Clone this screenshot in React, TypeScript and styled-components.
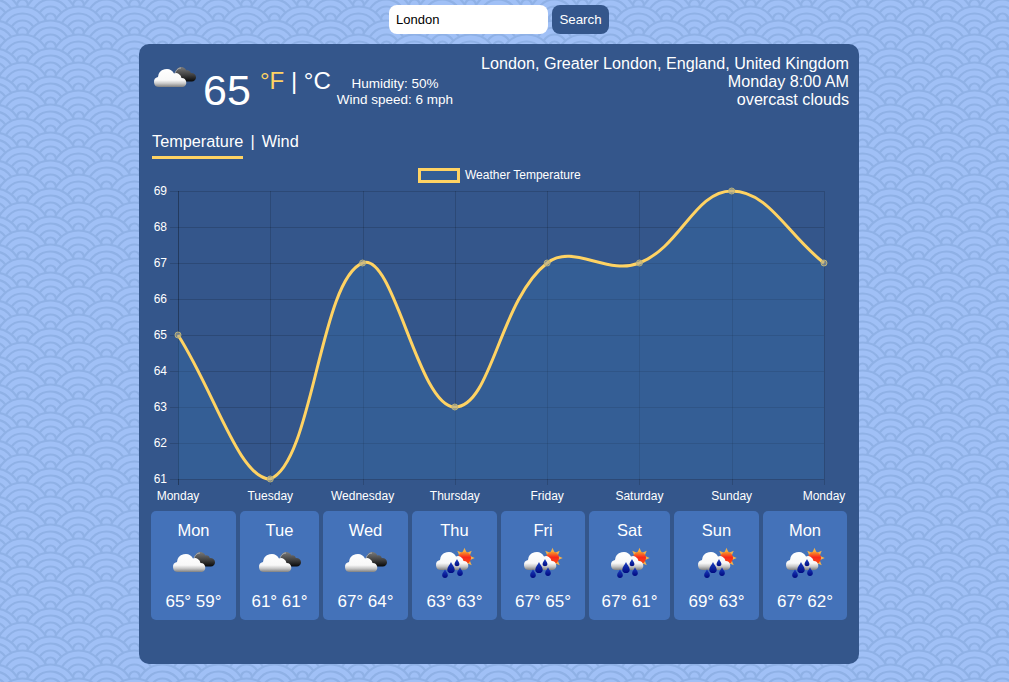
import { useId } from "react";
import styled, { createGlobalStyle } from "styled-components";

const FONT = `"Liberation Sans", Arial, sans-serif`;
const YELLOW = "#ffd363";
const PANEL = "#34568b";

// seigaiha wave tile, rows staggered by half a tile and painted top to bottom
const buildWaveTile = () => {
  let circles = "";
  for (let row = -2; row < 7; row++) {
    const y = 5 + row * 14;
    const offset = row % 2 === 0 ? 0 : 28;
    for (let col = -1; col < 3; col++) {
      const x = 22.5 + offset + col * 56;
      circles += `<circle cx="${x}" cy="${y}" r="26.5" fill="#a0c0f6"/>`;
      [26.5, 19.5, 12.5, 5.5].forEach((r) => {
        circles += `<circle cx="${x}" cy="${y}" r="${r}" fill="none" stroke="#8fb1e6" stroke-width="2.2"/>`;
      });
    }
  }
  const svg = `<svg xmlns="http://www.w3.org/2000/svg" width="56" height="28">${circles}</svg>`;
  return `url("data:image/svg+xml,${encodeURIComponent(svg)}")`;
};

const GlobalStyle = createGlobalStyle`
  html, body {
    margin: 0;
    height: 100%;
  }

  body {
    background-color: #a0c0f6;
    background-image: ${buildWaveTile()};
    font-family: ${FONT};
    overflow: hidden;
  }
`;

const Page = styled.div`
  width: 998px;
  height: 682px;
  display: flex;
  flex-direction: column;
  align-items: center;
`;

const SearchForm = styled.form`
  display: flex;
  gap: 4px;
  margin: 5px 0 10px;
`;

const SearchInput = styled.input`
  width: 159px;
  height: 29px;
  box-sizing: border-box;
  padding: 0 7px;
  border: 0;
  border-radius: 8px;
  background: #fff;
  color: #000;
  font-family: ${FONT};
  font-size: 13px;
  outline: none;
`;

const SearchButton = styled.button`
  width: 57px;
  height: 29px;
  padding: 0;
  border: 0;
  border-radius: 8px;
  background: ${PANEL};
  color: #fff;
  font-family: ${FONT};
  font-size: 13.33px;
`;

const Panel = styled.main`
  width: 720px;
  height: 620px;
  box-sizing: border-box;
  padding-top: 10px;
  border-radius: 10px;
  background: ${PANEL};
  color: #fff;
`;

const Header = styled.header`
  display: flex;
  justify-content: space-between;
  height: 54px;
  padding: 0 10px 0 11px;
`;

const Current = styled.div`
  display: flex;
  align-items: flex-start;
`;

const CurrentIcon = styled.div`
  width: 50px;
  height: 50px;
  margin-top: -2px;
`;

const BigTemp = styled.span`
  width: 48px;
  margin: 14px 0 0 3px;
  font-size: 43px;
  line-height: 44px;
`;

const Units = styled.div`
  margin: 15px 0 0 9px;
  font-size: 24px;
  line-height: 24px;
`;

const Unit = styled.span<{ $active?: boolean }>`
  color: ${({ $active }) => ($active ? YELLOW : "#fff")};
`;

const Stats = styled.div`
  margin: 22px 0 0 6px;
  font-size: 13.5px;
  line-height: 16px;
  text-align: center;
`;

const Place = styled.div`
  font-size: 16.15px;
  line-height: 18px;
  text-align: right;
`;

const Tabs = styled.nav`
  display: flex;
  align-items: flex-start;
  height: 27px;
  margin: 24px 0 1px 13px;
  font-size: 16.3px;
  line-height: 18px;
`;

const Tab = styled.span<{ $active?: boolean }>`
  height: 24px;
  border-bottom: 3px solid ${({ $active }) => ($active ? YELLOW : "transparent")};
`;

const TabDivider = styled.span`
  margin: 0 7px;
`;

const Chart = styled.svg`
  display: block;
  width: 720px;
  height: 351px;
`;

const ChartLabel = styled.text`
  fill: #fff;
  font-family: ${FONT};
  font-size: 12px;
`;

const Forecast = styled.section`
  display: flex;
  gap: 4px;
  padding: 0 12px;
`;

const DayCard = styled.article<{ $width: number }>`
  width: ${({ $width }) => $width}px;
  height: 109px;
  box-sizing: border-box;
  padding-top: 10px;
  display: flex;
  flex-direction: column;
  align-items: center;
  border-radius: 5px;
  background: #4472b9;
  font-size: 16.5px;
  line-height: 18px;
`;

const DayIcon = styled.div`
  width: 50px;
  height: 50px;
  margin: -2px 0 6px;
`;

const DayTemps = styled.span`
  font-size: 17px;
`;

const CLOUD_PATH = "M9 35A5 5 0 0 1 8 25.100A8.500 8.500 0 0 1 24 21.500A5.500 5.500 0 0 1 31.500 26A4.600 4.600 0 0 1 33 35Z";

const CloudFill = ({ id }: { id: string }) => (
  <linearGradient id={id} x1="0" y1="0" x2="0" y2="1">
    <stop offset="0" stopColor="#fff" />
    <stop offset="0.62" stopColor="#f8f8f8" />
    <stop offset="0.8" stopColor="#c9c9c9" />
    <stop offset="1" stopColor="#808080" />
  </linearGradient>
);

const OvercastIcon = () => {
  const id = useId();
  return (
    <svg width="50" height="50" viewBox="0 0 50 50">
      <defs>
        <CloudFill id={`${id}w`} />
        <linearGradient id={`${id}d`} x1="0" y1="0" x2="0" y2="1">
          <stop offset="0" stopColor="#7a7a7a" />
          <stop offset="0.55" stopColor="#404040" />
          <stop offset="1" stopColor="#080808" />
        </linearGradient>
      </defs>
      <path
        d="M27 29.500c-2 0-3-1.500-3-3 0-1 .3-2 1-2.600C25 19 27.500 15 31 15c2.500 0 4.500 1.500 5.300 3.500 1-.4 2.200-.3 3 .3.800.5 1.300 1.400 1.500 2.300 3-.2 5.200 1.500 5.200 4.200 0 2.400-1.800 4.200-4.200 4.200z"
        fill={`url(#${id}d)`}
      />
      <path d="M25 22c.5-3.500 3-6 6-6" fill="none" stroke="#b5b5b5" strokeWidth="0.9" />
      <path d={CLOUD_PATH} fill={`url(#${id}w)`} />
    </svg>
  );
};

const RainSunIcon = () => {
  const id = useId();
  const rays = [0, 45, 90, 135, 180, 225, 270, 315];
  return (
    <svg width="50" height="50" viewBox="0 0 50 50">
      <defs>
        <CloudFill id={`${id}w`} />
        <linearGradient id={`${id}s`} x1="0" y1="0" x2="0" y2="1">
          <stop offset="0" stopColor="#f6a02c" />
          <stop offset="0.45" stopColor="#f8271a" />
          <stop offset="1" stopColor="#f8500f" />
        </linearGradient>
        <linearGradient id={`${id}r`} x1="0" y1="0" x2="0" y2="1">
          <stop offset="0" stopColor="#1c3fc0" />
          <stop offset="1" stopColor="#000a80" />
        </linearGradient>
      </defs>
      {rays.map((angle) => (
        <polygon
          key={angle}
          points="32.600,15.300 36.400,15.300 34.500,10.800"
          fill="#f4b04a"
          transform={`rotate(${angle} 34.500 21)`}
        />
      ))}
      <circle cx="34.500" cy="21" r="6.500" fill={`url(#${id}s)`} />
      <path d={CLOUD_PATH} transform="translate(2 -2)" fill={`url(#${id}w)`} />
      {[
        [15, 37, 1.300],
        [21, 31, 1.700],
        [27, 26, 1.100],
        [30, 35, 1.300],
      ].map(([x, y, s]) => (
        <path
          key={x}
          d="M0-3.600C.6-2 2.200-.8 2.200 1 2.200 2.300 1.200 3 0 3S-2.200 2.300-2.200 1C-2.200-.8-.6-2 0-3.600z"
          transform={`translate(${x} ${y}) scale(${s})`}
          fill={`url(#${id}r)`}
        />
      ))}
    </svg>
  );
};

const DAYS = [
  { name: "Mon", temps: "65° 59°", width: 85, rain: false },
  { name: "Tue", temps: "61° 61°", width: 79, rain: false },
  { name: "Wed", temps: "67° 64°", width: 85, rain: false },
  { name: "Thu", temps: "63° 63°", width: 85, rain: true },
  { name: "Fri", temps: "67° 65°", width: 84, rain: true },
  { name: "Sat", temps: "67° 61°", width: 81, rain: true },
  { name: "Sun", temps: "69° 63°", width: 85, rain: true },
  { name: "Mon", temps: "67° 62°", width: 84, rain: true },
];

const LABELS = ["Monday", "Tuesday", "Wednesday", "Thursday", "Friday", "Saturday", "Sunday", "Monday"];
const TEMPS = [65, 61, 67, 63, 67, 67, 69, 67];
const TICKS = [69, 68, 67, 66, 65, 64, 63, 62, 61];

const LEFT = 178;
const RIGHT = 824;
const TOP = 191;
const BOTTOM = 479;

const xAt = (i: number) => LEFT + ((RIGHT - LEFT) / 7) * i;
const yAt = (t: number) => TOP + (69 - t) * ((BOTTOM - TOP) / 8);
const snap = (v: number) => Math.round(v) + 0.5;
const POINTS = TEMPS.map((t, i) => ({ x: xAt(i), y: yAt(t) }));

// same spline as a tension 0.4 line chart, control points capped to the plot area
const buildLine = () => {
  const cap = (v: number, lo: number, hi: number) => Math.min(hi, Math.max(lo, v));
  const controls = POINTS.map((p, i) => {
    const prev = POINTS[i - 1] ?? p;
    const next = POINTS[i + 1] ?? p;
    const d01 = Math.hypot(p.x - prev.x, p.y - prev.y);
    const d12 = Math.hypot(next.x - p.x, next.y - p.y);
    const fa = (0.4 * d01) / (d01 + d12);
    const fb = (0.4 * d12) / (d01 + d12);
    return {
      inX: cap(p.x - fa * (next.x - prev.x), LEFT, RIGHT),
      inY: cap(p.y - fa * (next.y - prev.y), TOP, BOTTOM),
      outX: cap(p.x + fb * (next.x - prev.x), LEFT, RIGHT),
      outY: cap(p.y + fb * (next.y - prev.y), TOP, BOTTOM),
    };
  });
  let d = `M${POINTS[0].x} ${POINTS[0].y}`;
  for (let i = 1; i < POINTS.length; i++) {
    const a = controls[i - 1];
    const b = controls[i];
    d += `C${a.outX} ${a.outY} ${b.inX} ${b.inY} ${POINTS[i].x} ${POINTS[i].y}`;
  }
  return d;
};

const LINE = buildLine();
const GRID = "rgba(0, 0, 0, 0.15)";
const AREA = "rgba(53, 108, 165, 0.36)";

const TemperatureChart = () => (
  <Chart viewBox="139 160 720 351">
    <rect x="419.500" y="169.500" width="39" height="12" fill={AREA} stroke={YELLOW} strokeWidth="3" />
    <ChartLabel x="465" y="179">
      Weather Temperature
    </ChartLabel>
    {TICKS.map((t) => (
      <g key={t}>
        <line x1="170" x2={RIGHT} y1={snap(yAt(t))} y2={snap(yAt(t))} stroke={GRID} />
        <ChartLabel x="167" y={yAt(t) + 4} textAnchor="end">
          {t}
        </ChartLabel>
      </g>
    ))}
    {LABELS.map((label, i) => (
      <g key={i}>
        <line
          x1={snap(xAt(i))}
          x2={snap(xAt(i))}
          y1={TOP}
          y2={BOTTOM + 6}
          stroke={i === 0 ? "rgba(0, 0, 0, 0.32)" : GRID}
        />
        <ChartLabel x={xAt(i)} y="500" textAnchor="middle">
          {label}
        </ChartLabel>
      </g>
    ))}
    <path d={`${LINE}L${RIGHT} ${BOTTOM}L${LEFT} ${BOTTOM}Z`} fill={AREA} />
    <path d={LINE} fill="none" stroke={YELLOW} strokeWidth="3" />
    {POINTS.map((p, i) => (
      <circle
        key={i}
        cx={p.x}
        cy={p.y}
        r="3"
        fill="rgba(170, 170, 150, 0.55)"
        stroke="rgba(190, 180, 120, 0.95)"
      />
    ))}
  </Chart>
);

export default function App() {
  return (
    <Page>
      <GlobalStyle />
      <SearchForm onSubmit={(e) => e.preventDefault()}>
        <SearchInput defaultValue="London" />
        <SearchButton type="submit">Search</SearchButton>
      </SearchForm>
      <Panel>
        <Header>
          <Current>
            <CurrentIcon>
              <OvercastIcon />
            </CurrentIcon>
            <BigTemp>65</BigTemp>
            <Units>
              <Unit $active>°F</Unit> | <Unit>°C</Unit>
            </Units>
            <Stats>
              Humidity: 50%
              <br />
              Wind speed: 6 mph
            </Stats>
          </Current>
          <Place>
            London, Greater London, England, United Kingdom
            <br />
            Monday 8:00 AM
            <br />
            overcast clouds
          </Place>
        </Header>
        <Tabs>
          <Tab $active>Temperature</Tab>
          <TabDivider>|</TabDivider>
          <Tab>Wind</Tab>
        </Tabs>
        <TemperatureChart />
        <Forecast>
          {DAYS.map((day, i) => (
            <DayCard key={i} $width={day.width}>
              {day.name}
              <DayIcon>{day.rain ? <RainSunIcon /> : <OvercastIcon />}</DayIcon>
              <DayTemps>{day.temps}</DayTemps>
            </DayCard>
          ))}
        </Forecast>
      </Panel>
    </Page>
  );
}
